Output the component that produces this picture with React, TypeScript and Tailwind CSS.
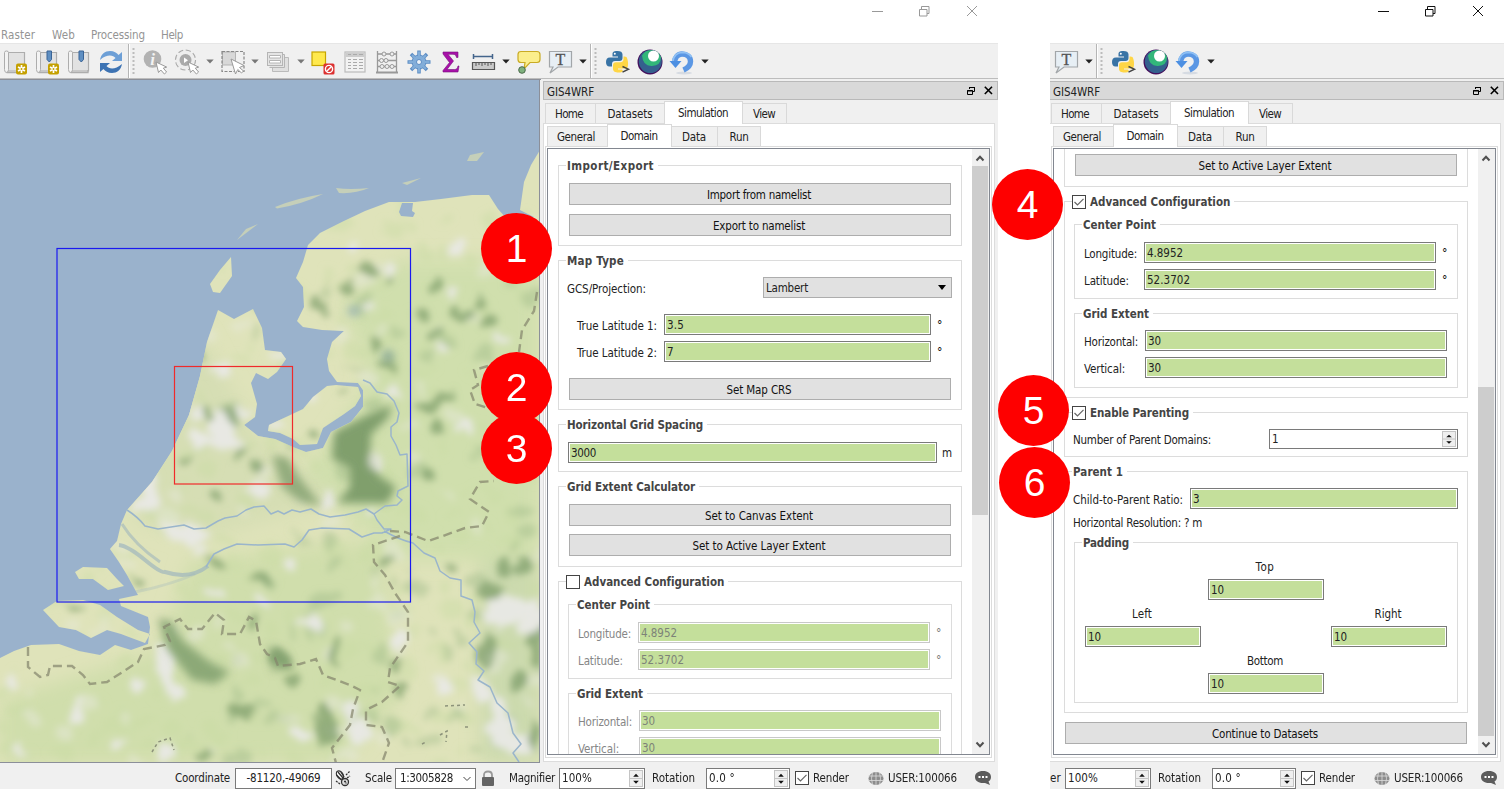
import { useLayoutEffect, useRef, type ReactNode } from "react";

/* Text run whose tracking is tuned so that it spans exactly `w` pixels. */
function T({ children, w, className = "" }: { children: string; w: number; className?: string }) {
  const ref = useRef<HTMLSpanElement>(null);
  useLayoutEffect(() => {
    const el = ref.current;
    if (!el) return;
    el.style.letterSpacing = "0px";
    const natural = el.getBoundingClientRect().width;
    el.style.letterSpacing = `${(w - natural) / children.length}px`;
  }, [children, w]);
  return (
    <span ref={ref} className={`inline-block shrink-0 whitespace-pre ${className}`}>
      {children}
    </span>
  );
}

/* ---------- form widgets ---------- */

function Group({ title, w, className = "", check, children }: { title: string; w: number; className?: string; check?: boolean; children: ReactNode }) {
  return (
    <div className={`relative shrink-0 border border-[#dcdcdc] ${className}`}>
      <div className="absolute -top-[9px] left-[7px] flex h-[17px] items-center bg-white pl-px pr-1 text-[11.5px] font-bold text-[#444]">
        {check !== undefined && <Check on={check} className="mr-[4px] -ml-px" />}
        <T w={w} className="pt-px">{title}</T>
      </div>
      {children}
    </div>
  );
}

function Check({ on, className = "" }: { on: boolean; className?: string }) {
  return (
    <span className={`flex h-[14px] w-[14px] shrink-0 items-center justify-center border border-[#444] bg-white ${className}`}>
      {on && (
        <svg width="12" height="12" viewBox="0 0 12 12" fill="none" stroke="#666" strokeWidth="1.2">
          <path d="M1.5 6 4.5 9 10.5 2.8" />
        </svg>
      )}
    </span>
  );
}

function Button({ label, w, className = "" }: { label: string; w: number; className?: string }) {
  return (
    <button className={`flex h-[22px] shrink-0 items-center justify-center border border-[#adadad] bg-[#e1e1e1] pr-[2px] pt-[2px] text-[#111] ${className}`}>
      <T w={w}>{label}</T>
    </button>
  );
}

function Field({ value, w, dim, className = "" }: { value: string; w: number; dim?: boolean; className?: string }) {
  return (
    <div className={`flex h-[21px] shrink-0 border p-px ${dim ? "border-[#c8c8c8] text-[#7d8378]" : "border-[#7a7a7a] text-[#222]"} ${className}`}>
      <div className="flex flex-1 items-center bg-[#c4df9b] pl-px pt-[2px]">
        <T w={w}>{value}</T>
      </div>
    </div>
  );
}

function Spin({ value, w, className = "" }: { value: string; w: number; className?: string }) {
  return (
    <div className={`flex shrink-0 border border-[#7a7a7a] bg-white p-px ${className}`}>
      <div className="flex flex-1 items-center pl-px pt-px">
        <T w={w}>{value}</T>
      </div>
      <div className="flex w-[14px] flex-col border border-[#c4c4c4] bg-[#efefef]">
        <svg className="h-full w-full" viewBox="0 0 12 16" preserveAspectRatio="none">
          <path d="M3.2 6 6 3l2.800 3zM3.200 10.500 6 13.500l2.800-3z" fill="#111" />
          <path d="M0 8h12" stroke="#c4c4c4" />
        </svg>
      </div>
    </div>
  );
}

function Row({ label, w, dim, className = "", labelClass, children }: { label: string; w: number; dim?: boolean; className?: string; labelClass: string; children: ReactNode }) {
  return (
    <div className={`flex h-[21px] shrink-0 items-center ${className}`}>
      <div className={`shrink-0 pt-[3px] ${labelClass} ${dim ? "text-[#868686]" : "text-[#222]"}`}>
        <T w={w}>{label}</T>
      </div>
      {children}
    </div>
  );
}

const Degree = ({ dim }: { dim?: boolean }) => <span className={`ml-[6px] pt-px text-[12px] ${dim ? "text-[#777]" : "text-black"}`}>°</span>;

function GridExtentCalculator({ className = "" }: { className?: string }) {
  return (
    <Group title="Grid Extent Calculator" w={128} className={`flex h-[81px] flex-col gap-2 px-[10px] pt-[17px] ${className}`}>
      <Button label="Set to Canvas Extent" w={108} />
      <Button label="Set to Active Layer Extent" w={133} />
    </Group>
  );
}

function AdvancedConfiguration({ on }: { on: boolean }) {
  const dim = !on;
  return (
    <Group title="Advanced Configuration" w={140} check={on} className="mt-[14px] flex h-[197px] flex-col pl-[9px] pt-[22px]">
      <Group title="Center Point" w={73} className="h-[75px] w-[384px] pl-[9px] pt-[17px]">
        <Row label="Longitude:" w={53} dim={dim} labelClass="w-[60px]">
          <Field value="4.8952" w={36} dim={dim} className="w-[292px]" />
          <Degree dim={dim} />
        </Row>
        <Row label="Latitude:" w={45} dim={dim} labelClass="w-[60px]" className="mt-[6px]">
          <Field value="52.3702" w={43} dim={dim} className="w-[292px]" />
          <Degree dim={dim} />
        </Row>
      </Group>
      <Group title="Grid Extent" w={66} className="mt-[14px] h-[75px] w-[384px] pl-[9px] pt-[16px]">
        <Row label="Horizontal:" w={54} dim={dim} labelClass="w-[61px]">
          <Field value="30" w={13} dim={dim} className="w-[302px]" />
        </Row>
        <Row label="Vertical:" w={41} dim={dim} labelClass="w-[61px]" className="mt-[6px]">
          <Field value="30" w={13} dim={dim} className="w-[302px]" />
        </Row>
      </Group>
    </Group>
  );
}

function FormTop() {
  return (
    <div className="flex w-[404px] flex-col pt-[16px]">
      <Group title="Import/Export" w={87} className="flex h-[81px] flex-col gap-[9px] px-[10px] pt-[17px]">
        <Button label="Import from namelist" w={104} />
        <Button label="Export to namelist" w={92} />
      </Group>
      <Group title="Map Type" w={57} className="mt-[14px] flex h-[150px] flex-col pt-[16px]">
        <Row label="GCS/Projection:" w={79} labelClass="w-[204px] pl-[8px]">
          <div className="flex h-[21px] w-[189px] items-center justify-between border border-[#adadad] bg-[#e1e1e1] pl-[2px] pr-[5px]">
            <T w={42} className="pt-[2px]">Lambert</T>
            <svg width="8" height="5" viewBox="0 0 8 5"><path d="M0 0h8L4 5z" fill="#000" /></svg>
          </div>
        </Row>
        <Row label="True Latitude 1:" w={80} labelClass="w-[87px]" className="mt-[16px] ml-[18px]">
          <Field value="3.5" w={17} className="w-[267px]" />
          <Degree />
        </Row>
        <Row label="True Latitude 2:" w={80} labelClass="w-[87px]" className="mt-[6px] ml-[18px]">
          <Field value="7" w={7} className="w-[267px]" />
          <Degree />
        </Row>
        <Button label="Set Map CRS" w={65} className="mx-[10px] mt-[16px]" />
      </Group>
      <Group title="Horizontal Grid Spacing" w={136} className="mt-[14px] flex h-[48px] pl-[9px] pt-[17px]">
        <Field value="3000" w={25} className="w-[369px]" />
        <span className="pl-[5px] pt-[4px] leading-[15px]">m</span>
      </Group>
      <GridExtentCalculator className="mt-[14px]" />
      <AdvancedConfiguration on={false} />
    </div>
  );
}

function PadCell({ label, w }: { label: string; w: number }) {
  return (
    <div className="flex flex-col">
      <div className="flex h-[26px] items-center justify-center pr-[2px] pt-[2px]"><T w={w}>{label}</T></div>
      <Field value="10" w={13} className="w-[116px]" />
    </div>
  );
}

function FormBottom() {
  return (
    <div className="flex w-[404px] flex-col">
      <div className="flex h-[38px] shrink-0 flex-col border border-t-0 border-[#dcdcdc] px-[10px] pt-[5px]">
        <Button label="Set to Active Layer Extent" w={133} />
      </div>
      <AdvancedConfiguration on />
      <Group title="Enable Parenting" w={99} check className="mt-[14px] flex h-[45px] pl-[9px] pt-[16px]">
        <div className="-ml-px flex h-[21px] w-[196px] items-center pt-px"><T w={138}>Number of Parent Domains:</T></div>
        <Spin value="1" w={7} className="h-[20px] w-[189px]" />
      </Group>
      <Group title="Parent 1" w={50} className="mt-[14px] flex h-[242px] flex-col pl-[9px] pt-[16px]">
        <Row label="Child-to-Parent Ratio:" w={110} labelClass="-ml-px w-[117px]">
          <Field value="3" w={7} className="w-[268px]" />
        </Row>
        <div className="-ml-px flex h-[28px] items-center pt-px"><T w={129}>Horizontal Resolution: ? m</T></div>
        <Group title="Padding" w={46} className="mt-[5px] flex h-[161px] w-[384px] flex-col items-center pt-[10px]">
          <PadCell label="Top" w={19} />
          <div className="flex w-[362px] justify-between">
            <PadCell label="Left" w={20} />
            <PadCell label="Right" w={27} />
          </div>
          <PadCell label="Bottom" w={36} />
        </Group>
      </Group>
      <Button label="Continue to Datasets" w={106} className="mx-px mt-[9px]" />
    </div>
  );
}

/* ---------- dock ---------- */

function Tab({ label, w, active, className }: { label: string; w: number; active?: boolean; className: string }) {
  return (
    <div
      className={`flex shrink-0 items-center justify-center border border-b-0 border-[#d9d9d9] ${active ? "z-10 -mx-px -mb-px h-[23px] bg-white pr-px" : "h-[20px] bg-[#f0f0f0] pt-[2px] first:pr-[3px] not-first:border-l-0"} ${className}`}
    >
      <T w={w}>{label}</T>
    </div>
  );
}

const Chevron = ({ up }: { up?: boolean }) => (
  <svg width="16" height="17" viewBox="0 0 16 17" fill="none" stroke="#505050" strokeWidth="2" className={up ? "" : "rotate-180"}>
    <path d="M4.500 11.500 8 7.700 11.500 11.500" />
  </svg>
);

function Dock({ children, thumb }: { children: ReactNode; thumb: string }) {
  return (
    <div className="flex w-[455px] shrink-0 flex-col bg-[#f0f0f0] pt-[2px]">
      <div className="flex h-[19px] shrink-0 items-center border border-[#b9b9b9] bg-[#d9d9d9] pl-[3px] pr-[4px]">
        <T w={47} className="pt-[3px]">GIS4WRF</T>
        <svg className="ml-auto" width="10" height="10" viewBox="0 0 10 10" fill="none" stroke="#000">
          <path d="M3.500 3V1.500h5v4H7M3 1.500h6M1.500 4.500h5v4h-5zM1 5h6" />
        </svg>
        <svg className="ml-[8px]" width="9" height="9" viewBox="0 0 9 9" fill="none" stroke="#000" strokeWidth="1.600">
          <path d="M.8.8 8 8M8 .8.8 8" />
        </svg>
      </div>
      <div className="flex h-[23px] shrink-0 items-end pl-[2px]">
        <Tab label="Home" w={28} className="w-[51px]" />
        <Tab label="Datasets" w={45} className="w-[69px]" />
        <Tab label="Simulation" w={50} active className="w-[79px]" />
        <Tab label="View" w={22} className="w-[45px]" />
      </div>
      <div className="mr-[3px] flex h-[639px] shrink-0 flex-col border border-[#dcdcdc] bg-white pl-px pr-[2px] pt-[1px]">
        <div className="flex h-[21px] shrink-0 items-end pl-[2px]">
          <Tab label="General" w={38} className="w-[61px]" />
          <Tab label="Domain" w={37} active className="w-[65px]" />
          <Tab label="Data" w={24} className="w-[47px]" />
          <Tab label="Run" w={19} className="w-[43px]" />
        </div>
        <div className="flex h-[612px] border border-[#dcdcdc] bg-white p-px">
          <div className="flex h-[607px] w-[443px] overflow-hidden border border-[#828790] bg-white">
            <div className="flex min-w-0 flex-1 flex-col overflow-hidden pl-[10px]">{children}</div>
            <div className="flex w-[17px] shrink-0 flex-col bg-[#f0f0f0] pr-px">
              <Chevron up />
              <div className="flex-1">
                <div className={`w-[16px] bg-[#cdcdcd] ${thumb}`} />
              </div>
              <Chevron />
            </div>
          </div>
        </div>
      </div>
    </div>
  );
}

/* ---------- window chrome ---------- */

function Caption({ color }: { color: string }) {
  return (
    <svg width="108" height="14" viewBox="0 0 108 14" fill="none" className={color} stroke="currentColor" strokeWidth="1">
      <path d="M1 7.500h11M48.500 5.500h7.500v6.500h-7.500zM50.500 5.500v-3h7.500v7h-2M96 2l10 10M106 2l-10 10" />
    </svg>
  );
}

const Icon = ({ children, className = "w-[32px]" }: { children: ReactNode; className?: string }) => (
  <div className={`flex h-full shrink-0 items-center justify-center pt-px ${className}`}>
    <svg width="28" height="28" viewBox="0 0 28 28" fill="none" className="shrink-0">{children}</svg>
  </div>
);

const Caret = ({ className, color = "#222" }: { className: string; color?: string }) => (
  <div className={`flex h-full shrink-0 items-center justify-center pt-px ${className}`}>
    <svg width="8" height="5" viewBox="0 0 8 5"><path d="M.3.4h7.400L4 4.600z" fill={color} /></svg>
  </div>
);

const Sep = () => <div className="mx-px h-full w-[2px] shrink-0 border-l border-[#b5b5b5] bg-white" />;

const Grip = ({ className }: { className: string }) => (
  <div className={`flex h-full shrink-0 items-center ${className}`}>
    <svg width="4" height="28" viewBox="0 0 4 28"><path d="M2.500 1v27" stroke="#bcbcbc" strokeWidth="2" strokeDasharray="2 2" /></svg>
  </div>
);

const Cursor = () => <path d="M15 14 17.500 24.500l2.300-2.500 3.600 4 2.200-2-3.300-3.800 3.400-1.100z" fill="#fff" stroke="#999" />;

const Scroll = () => (
  <>
    <path d="M6.500 4.500h17v18.500H6.500z" fill="#e2e2e2" stroke="#adadad" strokeWidth="1.200" />
    <path d="M3.500 4.500q0-1.500 2-1.500t2 1.500v17q0 3-2 3t-2-3z" fill="#f3f3f3" stroke="#adadad" />
    <path d="M5.500 24.500H23V22" stroke="#adadad" strokeWidth="1.300" />
  </>
);

const Badge = () => (
  <>
    <rect x="15" y="15.500" width="11" height="11" rx="2" fill="#c4a000" />
    <path d="M20.500 17v8M17 19l7 4M24 19l-7 4" stroke="#fff" strokeWidth="1.700" />
    <circle cx="20.500" cy="21" r="1" fill="#c4a000" />
  </>
);

const Pin = () => <path d="M14 3h4.500v8.500l-2.200 2.500-2.300-2.500z" fill="#5f8fc2" stroke="#3a6496" />;

function ToolsTail() {
  return (
    <>
      <Icon>
        <path d="M2.500 3.500h22v15.500H11L3 25l3-6H2.500z" fill="#e7eff5" stroke="#a2a6a9" strokeWidth="1.200" />
        <text x="13.500" y="16.500" textAnchor="middle" fontFamily="Liberation Serif, serif" fontSize="16" fill="#555" stroke="#555" strokeWidth=".3">T</text>
      </Icon>
      <Caret className="w-[12px]" />
      <Sep />
      <Grip className="w-[9px]" />
      <Icon>
        <path d="M13.500 3c-4.500 0-5 1.500-5 3.500v2h5.500v1H6c-3 0-4 2-4 4.500S3 18.500 5.500 18.500H8V16c0-2 1-3 3-3h4.500c2 0 3-1 3-3V6.500c0-2.500-2-3.500-5-3.500z" fill="#3873a5" />
        <circle cx="10.800" cy="5.800" r="1" fill="#fff" />
        <path d="M19.500 8.500V11c0 2-1 3.200-3 3.200H12c-2 0-3 1-3 3V21c0 2.500 2.500 3.500 5.500 3.500 2 0 4-.5 4.500-1.500l-1-1.500h-4v-1h9c1.500-2 1.500-8-.5-11.500q-1-.7-3-.5z" fill="#ffd646" />
        <path d="m18.500 18.500 6 2.700-6 3" stroke="#444" strokeWidth="1.400" />
      </Icon>
      <Icon>
        <circle cx="14" cy="14" r="12.500" fill="#440f5c" />
        <circle cx="14.300" cy="13.500" r="11.500" fill="#34608d" />
        <path d="M6 7.500A10.500 10.500 0 0 1 25 9q0 8.500-9 9T6 7.500z" fill="#32b67a" />
        <circle cx="17.500" cy="8" r="5.500" fill="#fff" />
      </Icon>
      <Icon>
        <ellipse cx="16" cy="25" rx="8" ry="1.500" fill="#d6dbe2" />
        <path d="M6.500 14.500C7 9 10 6 14 6c5 0 8.500 3 8.500 7.500 0 4-2.500 6.500-7 8.500" stroke="#5b97e4" strokeWidth="5.400" />
        <path d="M4.800 13Q6.500 4.500 14.500 4.300 21 4.500 23.500 9" stroke="#8fc0f4" strokeWidth="1.800" />
        <path d="M1.500 13H13.500L7.500 20z" fill="#4c8fe2" />
      </Icon>
      <Caret className="w-[14px]" />
    </>
  );
}

function ToolsHead() {
  return (
    <>
      <Icon className="-ml-px w-[32px]"><Scroll /><Badge /></Icon>
      <Icon><Scroll /><Pin /><Badge /></Icon>
      <Icon><Scroll /><Pin /></Icon>
      <Icon>
        <path d="M3 12C4 6 8 3 13 3c4 0 7 2 8.500 4L25 4v9H15l3.500-3C16 7 10 6 3 12z" fill="#6d9fd6" />
        <path d="M25 16c-1 6-5 9-10 9-4 0-7-2-8.500-4L3 24v-9h10l-3.500 3c2.500 3 8.500 4 15.500-2z" fill="#3d73b3" />
      </Icon>
      <Sep />
      <Grip className="w-[8px]" />
      <Icon>
        <circle cx="11.500" cy="11" r="8.800" fill="#b2b2b2" />
        <text x="11.500" y="17" textAnchor="middle" fontFamily="Liberation Serif, serif" fontStyle="italic" fontWeight="bold" fontSize="17" fill="#f3f3f3">i</text>
        <Cursor />
      </Icon>
      <Icon>
        <circle cx="12.500" cy="12" r="8.800" stroke="#aaa" strokeWidth="3.600" strokeDasharray="4.600 2.300" />
        <circle cx="12.500" cy="12" r="8.800" fill="#eee" stroke="#eee" strokeWidth="1.400" />
        <circle cx="12.500" cy="12" r="6" fill="#aaa" />
        <path d="M11 9.500v5.500l4-2.800z" fill="#fff" />
        <Cursor />
      </Icon>
      <Caret className="w-[14px]" color="#777" />
      <Icon>
        <path d="M3.500 4h13v13h-13z" fill="#d8d8d8" stroke="#b4b4b4" />
        <path d="M3 3.500h22v20H3z" stroke="#888" strokeWidth="1.200" strokeDasharray="3 1.500" />
        <path d="m12 11 4.500 15 2.300-4.500 3.700 3.500 2-2-4-3.500 4.500-2z" fill="#fff" stroke="#999" />
      </Icon>
      <Caret className="w-[12px]" color="#777" />
      <Icon className="w-[33px]">
        <path d="M11.500 9.500h13v14h-16v-4" fill="#e0e0e0" stroke="#bbb" />
        <path d="M8.500 6.500h12v13H5.500" fill="#e4e4e4" stroke="#b5b5b5" />
        <rect x="3.500" y="4.500" width="15" height="13" fill="#e5e5e5" stroke="#b5b5b5" />
        <path d="M5.500 7.500h11v2.500h-11zM5.500 12.500h11V15h-11z" fill="#fff" stroke="#b5b5b5" />
      </Icon>
      <Caret className="w-[13px]" color="#777" />
      <Icon>
        <rect x="3" y="4" width="13.500" height="13.500" fill="#ffe94e" stroke="#c7a600" strokeWidth="1.200" />
        <rect x="14.500" y="15.500" width="11" height="11" rx="1.500" fill="#dc3030" />
        <circle cx="20" cy="21" r="3.600" stroke="#fff" strokeWidth="1.400" />
        <path d="m17.500 23.500 5-5" stroke="#fff" strokeWidth="1.400" />
      </Icon>
      <Icon className="w-[31px]">
        <rect x="4" y="4" width="20" height="20" fill="#f2f2f2" stroke="#bbb" strokeWidth="1.200" />
        <path d="M4.500 4.500h19v4.500h-19z" fill="#ccc" />
        <path d="M7 11.500h3M7 14.500h3M7 17.500h3M7 20.500h3M12 11.500h4M12 14.500h4M12 17.500h4M12 20.500h4M18 11.500h4M18 14.500h4M18 17.500h4M18 20.500h4M7 6.500h3M12 6.500h4M18 6.500h4" stroke="#aaa" />
      </Icon>
      <Icon className="w-[33px]">
        <path d="M4.500 3v21M23.500 3v21M4.500 6h19M4.500 12.500h19M4.500 18.500h19" stroke="#999" strokeWidth="1.300" />
        <path d="M3 24.500h22" stroke="#999" strokeWidth="2" />
        <g fill="#eee" stroke="#999"><circle cx="11" cy="6" r="2" /><circle cx="19" cy="6" r="2" /><circle cx="8.500" cy="12.500" r="2" /><circle cx="13" cy="12.500" r="2" /><circle cx="9" cy="18.500" r="2" /><circle cx="14" cy="18.500" r="2" /><circle cx="19" cy="18.500" r="2" /></g>
      </Icon>
      <Icon>
        <g stroke="#5b8cc4" strokeWidth="3.500"><path d="M14 2.500v23M2.500 14h23M6 6l16 16M22 6 6 22" /></g>
        <circle cx="14" cy="14" r="7" fill="#82add9" stroke="#5b8cc4" />
        <g stroke="#82add9" strokeWidth="2"><path d="M14 3.500v21M3.500 14h21M7 7l14 14M21 7 7 21" /></g>
        <circle cx="14" cy="14" r="2.500" fill="#eef3f9" stroke="#5b8cc4" />
      </Icon>
      <Icon>
        <path d="M6 4h15v5.500h-1.500C19 7 18 6.300 16 6.300h-5L16.500 13l-6.500 8.500h7.500c2 0 3-1 3.500-3.500H22L21 24H6v-1.500L12.500 14.500 6 6z" fill="#a811a8" stroke="#76107c" strokeWidth=".6" />
      </Icon>
      <Icon>
        <path d="M4 8.500h20M4.500 6v5M23.500 6v5" stroke="#44658c" strokeWidth="1.500" />
        <path d="M3.500 14.500h22v7h-22z" fill="#c9c9c9" stroke="#555" strokeWidth="1.200" />
        <path d="M7 15v3M10 15v2M13 15v3M16 15v2M19 15v3M22 15v2" stroke="#555" />
      </Icon>
      <Caret className="w-[14px]" />
      <Icon>
        <path d="M6 3.500h16q3 0 3 3v5q0 3-3 3h-7L9 21l1-6.500H6q-3 0-3-3v-5q0-3 3-3z" fill="#fbee8c" stroke="#c9ab24" strokeWidth="1.200" />
        <circle cx="7" cy="22" r="3.300" fill="#7fb27f" stroke="#4b6b4b" />
      </Icon>
    </>
  );
}

function StatusTail({ first, fw }: { first: string; fw: number }) {
  return (
    <>
      <T w={fw}>{first}</T>
      <Spin value="100%" w={30} className="ml-[4px] h-[21px] w-[86px]" />
      <T w={43} className="ml-[7px]">Rotation</T>
      <Spin value="0.0 °" w={26} className="ml-[11px] h-[21px] w-[84px]" />
      <Check on className="ml-[5px]" />
      <T w={36} className="ml-[4px]">Render</T>
      <svg className="ml-[19px] shrink-0" width="16" height="15" viewBox="0 0 16 15" fill="none">
        <ellipse cx="8" cy="7.500" rx="7.500" ry="6.500" fill="#8c8c8c" />
        <path d="M0 5h16M0 9.500h16M8 1v13M4.500 1.500q-2 6 0 12M11.500 1.500q2 6 0 12" stroke="#ddd" strokeWidth=".8" />
      </svg>
      <T w={69} className="ml-[4px]">USER:100066</T>
      <svg className="ml-[17px] shrink-0" width="18" height="16" viewBox="0 0 18 16">
        <path d="M9 1c5 0 8 2.500 8 6 0 2-1 3.500-2.500 4.500L16 15l-5-2H9c-5 0-8-2.500-8-6s3-6 8-6z" fill="#5c5c5c" />
        <path d="M4.500 7h2M8 7h2M11.500 7h2" stroke="#fff" strokeWidth="2" />
      </svg>
    </>
  );
}

/* ---------- map ---------- */

const mainland =
  "M540 150 L531 165 L524 182 L520 210 L534 217 L506 218 L498 209 L489 195 L472 195 L441 199 L415 202 L389 202 L365 211 L344 221 L320 233 L308 245 L303 262 L296 278 L303 287 L304 307 L297 321 L303 327 L322 330 L344 331 L332 342 L327 359 L329 371 L337 382 L358 383 L363 390 L363 407 L351 422 L331 432 L323 448 L306 452 L293 447 L275 439 L258 436 L244 425 L255 417 L257 404 L251 383 L256 373 L268 379 L277 372 L286 359 L281 352 L265 350 L262 328 L253 309 L234 319 L218 310 L207 342 L200 376 L189 415 L172 451 L152 482 L127 510 L121 524 L117 541 L110 549 L119 562 L127 575 L138 595 L119 599 L121 606 L148 617 L150 627 L148 644 L131 650 L115 645 L100 655 L79 651 L59 644 L31 645 L14 651 L0 658 L0 763 L540 763z";
const islands =
  "M336 385 L327 386 L313 397 L303 409 L269 425 L268 431 L280 433 L293 439 L300 445 L317 444 L323 428 L344 414 L355 406 L361 396 L358 387z M43 610 L57 601 L83 600 L100 605 L117 617 L138 630 L150 634 L145 643 L121 634 L107 630 L91 638 L76 630 L59 627z M75 572 L83 567 L107 568 L117 579 L124 586 L108 590 L93 579 L79 579z M231 257 L220 270 L210 284 L213 292 L220 293 L232 276z";
const holms = "M275 207 Q297 198 323 194 Q303 204 277 208.500z M336 188 Q350 190 369 188 Q355 194 339 193z M402 183 L421 178 L407 185z M467 161 L470 155 L484 152 L477 161z M237 240 L246 229 L258 224z";

/* [x, y, rx, ry] patches */
const woods = [
  [423, 316, 6, 10], [368, 268, 8, 6], [348, 288, 7, 6], [318, 302, 9, 5], [478, 303, 7, 6], [462, 315, 12, 5], [436, 336, 10, 5], [388, 365, 7, 6], [375, 345, 6, 5], [325, 308, 6, 5],
  [430, 405, 12, 6], [445, 398, 9, 6], [437, 430, 5, 9], [436, 289, 5, 7], [392, 281, 4, 5], [282, 660, 10, 9], [255, 625, 7, 7], [335, 650, 5, 14], [292, 680, 6, 7], [428, 475, 7, 5],
  [326, 732, 11, 17], [243, 710, 14, 8], [324, 715, 9, 12], [402, 691, 6, 8], [395, 665, 4, 9], [487, 650, 9, 18], [524, 565, 9, 10], [490, 590, 12, 8], [537, 645, 6, 22],
  [505, 567, 9, 9], [218, 563, 9, 5], [257, 465, 6, 7], [262, 580, 12, 6], [386, 560, 8, 7], [535, 735, 6, 18], [203, 356, 4, 6], [232, 418, 8, 7], [207, 412, 6, 7], [452, 568, 6, 6],
  [490, 320, 5, 8], [213, 497, 7, 4], [240, 454, 5, 6], [342, 388, 5, 3], [140, 580, 7, 5], [75, 608, 12, 4], [312, 436, 7, 5], [520, 680, 8, 12], [205, 758, 8, 5], [185, 460, 7, 5],
];
const towns = [
  [455, 247, 7, 6], [353, 248, 6, 4], [454, 294, 5, 6], [500, 340, 6, 6], [392, 270, 6, 5], [370, 307, 5, 4], [220, 368, 9, 6], [222, 424, 14, 12], [200, 440, 10, 9],
  [152, 497, 12, 13], [148, 480, 9, 9], [140, 508, 8, 8], [190, 535, 18, 7], [170, 528, 10, 6], [202, 550, 8, 6], [260, 490, 8, 8], [375, 462, 5, 8], [290, 567, 6, 6], [215, 592, 8, 5],
  [310, 622, 12, 9], [258, 602, 7, 5], [165, 665, 9, 22], [174, 690, 7, 12], [78, 710, 6, 12], [165, 750, 12, 10], [505, 610, 24, 14], [530, 622, 14, 16], [520, 605, 16, 8], [500, 730, 14, 18], [520, 745, 14, 12], [498, 705, 10, 10],
  [400, 640, 6, 10], [442, 682, 8, 10], [360, 730, 12, 12], [20, 750, 10, 6], [10, 685, 7, 5], [120, 745, 8, 5], [374, 514, 7, 4], [275, 355, 9, 5], [310, 398, 6, 5], [395, 395, 6, 6],
  [246, 412, 6, 5], [225, 440, 16, 9], [443, 350, 5, 5], [465, 425, 8, 7], [480, 690, 10, 12], [135, 685, 6, 6], [300, 735, 10, 8], [197, 412, 5, 8], [328, 500, 6, 8], [350, 710, 8, 10], [277, 428, 7, 4],
];

function scatter(count: number, seed: number) {
  let s = seed;
  const next = () => ((s = (s * 16807) % 2147483647) / 2147483647);
  return Array.from({ length: count }, () => [next() * 540, 200 + next() * 563, 3 + next() * 9, 3 + next() * 6]);
}
const meadow = scatter(330, 4711);
const copse = scatter(140, 977).filter(([x, y]) => y > 260 && x > 190);
const hamlet = scatter(90, 31337);

const Blobs = ({ list, fill, opacity }: { list: number[][]; fill: string; opacity: number }) => (
  <g fill={fill} opacity={opacity}>
    {list.map(([x, y, rx, ry], i) => <ellipse key={i} cx={x} cy={y} rx={rx} ry={ry} />)}
  </g>
);

function MapCanvas() {
  return (
    <svg width="541" height="684" viewBox="0 79 541 684" className="block shrink-0">
      <defs>
        <clipPath id="land"><path d={mainland + islands} /></clipPath>
        <filter id="soft" x="-5%" y="-5%" width="110%" height="110%">
          <feTurbulence type="fractalNoise" baseFrequency="0.06" numOctaves="3" seed="8" result="n" />
          <feDisplacementMap in="SourceGraphic" in2="n" scale="20" xChannelSelector="R" yChannelSelector="G" />
          <feGaussianBlur stdDeviation="3.600" />
        </filter>
        <filter id="haze" x="-10%" y="-10%" width="120%" height="120%"><feGaussianBlur stdDeviation="4" /></filter>
        <filter id="wide" x="-5%" y="-5%" width="110%" height="110%"><feGaussianBlur stdDeviation="9" /></filter>
        <filter id="edge"><feGaussianBlur stdDeviation=".7" /></filter>
      </defs>
      <rect y="79" width="541" height="684" fill="#9ab2cc" />
      <path d={mainland + islands} fill="#dfe3ba" filter="url(#edge)" />
      <path d={holms} fill="#c5cfb9" filter="url(#edge)" />
      <g clipPath="url(#land)">
        <g filter="url(#wide)">
          <path d="M400 260H540V560H400L380 540L300 480L370 380L340 300z" fill="#d0dfad" />
          <path d="M190 560L380 540L400 700L340 763H0V700L160 650z" fill="#d0deac" />
          <path d="M130 520L200 330L260 440L340 500L200 540z" fill="#d6deb4" />
          <path d="M480 560H541V763H480z" fill="#ccdaae" />
        </g>
        <g filter="url(#soft)">
          <Blobs list={meadow} fill="#c8dba2" opacity={0.42} />
          <Blobs list={copse} fill="#9bb886" opacity={0.42} />
          <Blobs list={hamlet} fill="#e8e9dc" opacity={0.5} />
          <Blobs list={towns} fill="#e9e9e6" opacity={0.95} />
          <Blobs list={woods} fill="#7b9b69" opacity={0.72} />
        </g>
        <g filter="url(#haze)" fill="#7b9b69">
          <path d="M392 405L367 415L334 432L332 459L350 469L350 487L337 503L387 503L396 487L378 475L370 457L371 434L388 418z" opacity=".95" />
          <path d="M272 455L282 487L300 502L322 506L300 478L288 458z" opacity=".75" />
          <path d="M158 618L172 622L182 640L210 662L230 672L215 684L192 680L168 650z" opacity=".8" />
          <path d="M268 645L286 652L292 668L272 672z" opacity=".6" />
          <ellipse cx="354" cy="311" rx="6" ry="5" fill="#9fb6b4" />
          <ellipse cx="388" cy="356" rx="6" ry="6" fill="#8eab98" />
          <ellipse cx="375" cy="461" rx="6" ry="8" fill="#dfe2d4" />
        </g>
        <g filter="url(#edge)" fill="none" stroke="#a0b6bd">
          <path d="M119 545Q128 546 145 560T165 572Q190 580 208 566" strokeWidth="4" opacity=".7" />
          <path d="M122 524Q135 545 160 562" strokeWidth="3" opacity=".6" />
          <path d="M135 592Q170 585 195 574" strokeWidth="3" opacity=".3" />
        </g>
        <path d="M402 203L413 203L412 211L415 213L413 217L401 216L399 212z" fill="#9ab2cc" filter="url(#edge)" />
      </g>
      <g fill="none" stroke="#9ab5cb" strokeWidth="1.500" strokeLinejoin="round">
        <path d="M127 510Q138 517 145 526L158 529L184 525L194 529L206 528L218 521L225 518L237 516L246 510L254 507L264 506L271 514L278 511L284 514L292 510L300 512L311 509L319 514L330 517L345 515L358 512L366 509L374 514L385 506L397 505L402 500L397 496L398 491L408 486L407 454L400 455L396 445L391 436L391 427L397 422L399 413L394 401L387 394L377 392L370 383L363 380" />
        <path d="M206 567L214 554L224 549L237 544L258 545L285 544L294 547L302 540L309 530L322 528L349 529L362 537L374 533L382 533L391 529L384 529L377 520L374 514M384 531Q400 540 413 543L424 553L435 558L440 571L450 578L461 580L461 596L472 600L475 612L474 622L480 633L469 643L477 652L476 664L484 671L478 680L490 687L497 703L508 713L513 733L521 744L513 753L519 762" />
      </g>
      <g fill="none" stroke="#85866d" strokeWidth="2.400" strokeDasharray="9 5" opacity=".72">
        <path d="M28 647V667L40 677L48 675L50 666L72 666L83 675L90 684L107 682L138 662L144 649L165 645L170 641L164 627L180 619L188 629L202 629L215 613L224 620L222 634L240 634L249 617L256 621L260 644L267 654L275 658L278 666L300 664L316 659L323 675L350 685L360 690L353 709L350 725L332 748L336 763" />
        <path d="M390 531L405 532L428 541L440 537L465 528L482 526L489 512L470 499L480 482L494 481M400 536L373 545L374 562L385 575L395 593L408 612L408 642L390 668L388 682L400 686L382 702L366 710L366 725L382 727L389 743L382 763" />
        <path d="M537 292L534 311L522 330L519 352M488 366L474 370L478 385L470 390L475 404L488 408" />
      </g>
      <path d="M152 752L158 742L170 738L174 750M445 706L465 705M440 735L447 731L446 742M422 744L426 742M465 727L470 727" stroke="#8d937b" strokeWidth="1.500" strokeDasharray="3 3" fill="none" />
      <rect x="57" y="248.500" width="353.500" height="353.500" fill="none" stroke="#1a1af0" strokeWidth="1.200" />
      <rect x="174.500" y="366.500" width="118" height="117.500" fill="none" stroke="#f02a2a" strokeWidth="1.200" />
      <path d="M0 79.500H541M539.500 79V763M0 762.500H541" stroke="#8b8f99" />
      <path d="M540.500 80V763" stroke="#f0f0f0" />
    </svg>
  );
}

/* ---------- page ---------- */

const marks = [
  { n: "1", pos: "left-[481px] top-[213px]" },
  { n: "2", pos: "left-[481px] top-[352px]" },
  { n: "3", pos: "left-[481px] top-[413px]" },
  { n: "4", pos: "left-[992px] top-[169px]" },
  { n: "5", pos: "left-[998px] top-[375px]" },
  { n: "6", pos: "left-[999px] top-[447px]" },
];

export default function App() {
  return (
    <div className="relative flex h-[789px] w-[1504px] justify-between overflow-hidden bg-white font-['DejaVu_Sans_Condensed','DejaVu_Sans',sans-serif] text-[11.5px] leading-[15px] text-[#222]">
      <section className="flex w-[998px] flex-col overflow-hidden">
        <header className="flex h-[43px] shrink-0 flex-col">
          <div className="flex h-[26px] justify-end pr-[19px] pt-[4px]"><Caption color="text-[#999]" /></div>
          <nav className="flex items-center pl-px pt-[2px] text-[#949494]">
            <T w={34}>Raster</T>
            <T w={23} className="ml-[17px]">Web</T>
            <T w={54} className="ml-[16px]">Processing</T>
            <T w={22} className="ml-[16px]">Help</T>
          </nav>
        </header>
        <div className="flex h-[36px] shrink-0 items-center border-b border-t border-b-[#bdbdbd] border-t-[#e6e6e6] bg-[#f0f0f0]">
          <ToolsHead />
          <ToolsTail />
        </div>
        <div className="flex h-[684px] shrink-0 bg-[#f0f0f0]">
          <MapCanvas />
          <div className="w-[2px] shrink-0 bg-[#f0f0f0]" />
          <Dock thumb="h-[349px]"><FormTop /></Dock>
        </div>
        <footer className="flex h-[26px] shrink-0 items-center bg-[#f0f0f0] pl-[175px] pt-[4px]">
          <T w={55}>Coordinate</T>
          <div className="ml-[5px] flex h-[21px] w-[97px] shrink-0 items-center justify-center border border-[#7a7a7a] bg-white pt-px"><T w={74}>-81120,-49069</T></div>
          <svg className="ml-[3px] shrink-0" width="16" height="17" viewBox="0 0 16 17" fill="none" stroke="#333" strokeWidth="1.300">
            <ellipse cx="5" cy="5" rx="3" ry="4.500" transform="rotate(-35 5 5)" fill="#fff" />
            <path d="m3 2 5 6M1.500 5l5 5M6 2l3 5" />
            <circle cx="10" cy="12" r="3.500" fill="#ddd" /><path d="M9 11.500h2v2M11 5l4-4M12 8l3-2M1 11l4 3" strokeDasharray="2 1" />
          </svg>
          <T w={27} className="ml-[14px]">Scale</T>
          <div className="ml-[3px] flex h-[21px] w-[81px] shrink-0 items-center justify-between border border-[#7a7a7a] bg-white pl-[4px] pr-[4px] pt-px">
            <T w={53}>1:3005828</T>
            <svg width="8" height="6" viewBox="0 0 8 6" fill="none" stroke="#444"><path d="M.5 1 4 4.500 7.500 1" /></svg>
          </div>
          <svg className="ml-[5px] shrink-0" width="14" height="17" viewBox="0 0 14 17">
            <path d="M3 8V5q0-3.500 4-3.500T11 5v3" fill="none" stroke="#999" strokeWidth="1.800" />
            <rect x="1" y="7" width="12" height="9" rx="1" fill="#646464" />
          </svg>
          <div className="ml-[14px] flex items-center"><StatusTail first="Magnifier" fw={46} /></div>
        </footer>
      </section>

      <section className="flex w-[454px] flex-col overflow-hidden">
        <header className="flex h-[43px] shrink-0 justify-end pr-[19px] pt-[4px]"><Caption color="text-[#111]" /></header>
        <div className="flex h-[36px] shrink-0 items-center border-b border-t border-b-[#bdbdbd] border-t-[#e6e6e6] bg-[#f0f0f0] pl-px">
          <ToolsTail />
        </div>
        <div className="-ml-px flex h-[684px] shrink-0">
          <Dock thumb="mt-[221px] h-[349px]"><FormBottom /></Dock>
        </div>
        <footer className="flex h-[26px] shrink-0 items-center bg-[#f0f0f0] pt-[4px]">
          <StatusTail first="er" fw={11} />
        </footer>
      </section>

      {marks.map(({ n, pos }) => (
        <div key={n} className={`absolute z-20 flex h-[71px] w-[71px] items-center justify-center rounded-full bg-[#fe0000] font-['Liberation_Sans',sans-serif] text-[39px] leading-none text-white ${pos}`}>
          {n}
        </div>
      ))}
    </div>
  );
}
